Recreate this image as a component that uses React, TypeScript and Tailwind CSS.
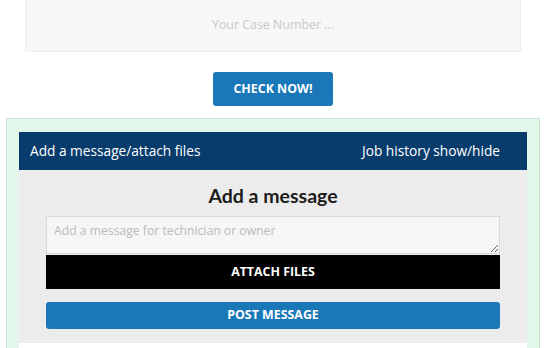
export default function App() {
  return (
    <div className="w-[549px] h-[348px] overflow-hidden bg-white" style={{ fontFamily: "'Open Sans', sans-serif" }}>
      <div className="pl-[25px] pr-[28px]">
        <div className="h-[52px] bg-[#f7f7f7] border border-[#efefef] border-t-0 flex items-center justify-center">
          <span className="text-[12.4px] text-[#c9c9c9]">Your Case Number ...</span>
        </div>
        <div className="flex justify-center mt-[20px]">
          <button className="w-[120px] h-[34px] rounded-[3px] bg-[#1a78b8] text-white text-[12.4px] font-bold uppercase">
            Check now!
          </button>
        </div>
      </div>

      <div className="mt-[12px] ml-[6px] w-[534px] bg-[#e3f8ea] border border-[#cbe5d3] pt-[13px] px-[12px]">
        <div className="h-[38px] bg-[#083c6c] flex items-center justify-between pl-[11px] pr-[27px] text-white text-[13.7px]">
          <span>Add a message/attach files</span>
          <span>Job history show/hide</span>
        </div>
        <div className="bg-[#ececec] px-[27px] pt-[12px] pb-[14px]">
          <h2 className="text-center text-[19.5px] leading-[28px] font-bold text-[#1c1c1c] mb-[6px]" style={{ fontFamily: "Lato, sans-serif" }}>
            Add a message
          </h2>
          <textarea
            className="block w-full h-[38px] bg-[#f6f6f6] border border-[#d9d9d9] px-[7px] py-[5px] text-[12.2px] leading-[18px] text-[#333] placeholder:text-[#bbbbbb] resize-y outline-none"
            placeholder="Add a message for technician or owner"
          />
          <button className="block w-full h-[34px] mt-[1px] bg-black text-white text-[12.4px] font-bold uppercase">
            Attach files
          </button>
          <button className="block w-full h-[27px] mt-[13px] rounded-[3px] bg-[#1a78b8] text-white text-[12.4px] font-bold uppercase">
            Post message
          </button>
        </div>
        <div className="h-[20px] bg-white" />
      </div>
    </div>
  );
}
